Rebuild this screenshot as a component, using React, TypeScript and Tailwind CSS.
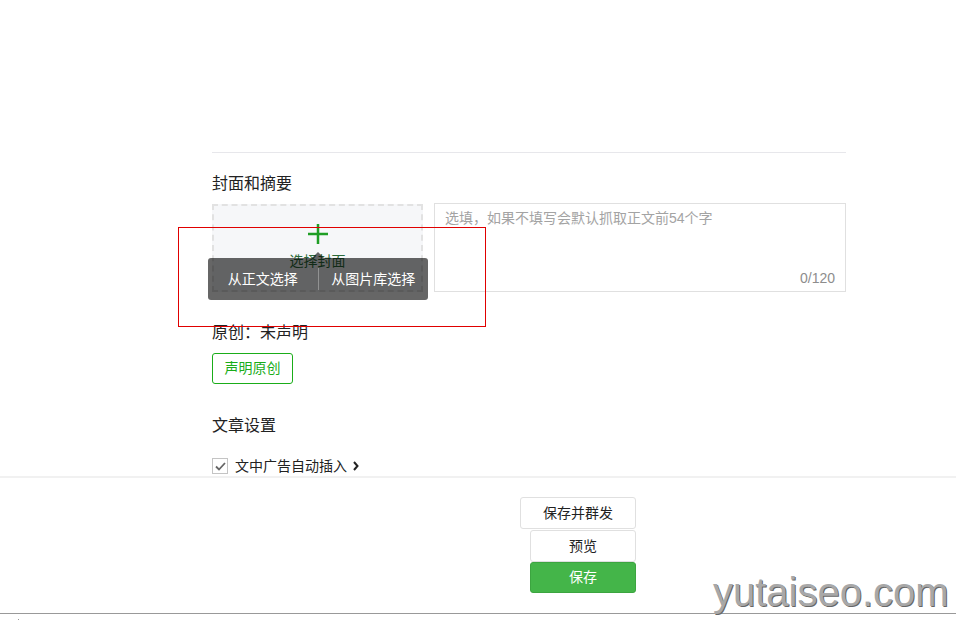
import React from 'react';

const font = "font-['Liberation_Sans','Noto_Sans_CJK_SC',sans-serif]";

export default function App() {
  return (
    <div className={`relative h-[621px] w-[956px] overflow-hidden bg-white text-[#222] ${font}`}>
      <div className="flex h-[621px] flex-col">
        {/* editor body */}
        <div className="h-[476px] shrink-0 overflow-hidden">
          <div className="ml-[212px] w-[634px] pt-[152px]">
            <div className="border-t border-[#e7e7eb]" />
            <h3 className="mt-[20px] text-[16px] leading-[22px]">封面和摘要</h3>

            <div className="mt-[8px] flex items-start gap-[11px]">
              <div className="relative mt-px h-[88px] w-[211px] border-2 border-dashed border-[#e2e2e2] bg-[#f6f7f9]">
                <div className="flex flex-col items-center pt-[17px]">
                  <svg width="22" height="22" viewBox="0 0 22 22">
                    <path d="M11 1v20M1 11h20" stroke="#1f9e25" strokeWidth="2.5" />
                  </svg>
                  <span className="mt-[5px] text-[14px] leading-[22px] text-[#2c6b3a]">选择封面</span>
                </div>

                {/* popover */}
                <div className="absolute left-[-6px] top-[52px] z-10 flex h-[42px] w-[220px] items-center rounded-[3px] bg-black/60 text-[14px] text-white">
                  <span className="absolute left-[104px] top-[-6px] h-0 w-0 border-x-[6px] border-b-[6px] border-x-transparent border-b-black/60" />
                  <button className="flex-1 text-center leading-[20px]">从正文选择</button>
                  <span className="h-[22px] w-px bg-white/30" />
                  <button className="flex-1 text-center leading-[20px]">从图片库选择</button>
                </div>
              </div>

              <div className="flex h-[89px] w-[412px] flex-col justify-between border border-[#e0e0e0] px-[10px] pb-[3px] pt-[4px]">
                <p className="text-[14px] leading-[20px] text-[#a3a3a3]">选填，如果不填写会默认抓取正文前54个字</p>
                <p className="text-right text-[14px] leading-[20px] text-[#8d8d8d]">0/120</p>
              </div>
            </div>

            <p className="mt-[30px] text-[16px] leading-[22px]">原创：未声明</p>
            <button className="mt-[9px] h-[31px] w-[81px] rounded-[3px] border border-[#1aad19] text-[14px] text-[#1aad19]">
              声明原创
            </button>

            <h3 className="mt-[31px] text-[16px] leading-[22px]">文章设置</h3>
            <div className="mt-[20px] flex items-center">
              <span className="flex h-[16px] w-[16px] items-center justify-center border border-[#c4c4c4]">
                <svg width="11" height="9" viewBox="0 0 11 9">
                  <path d="M1 4.5l3 3L10 1" fill="none" stroke="#666" strokeWidth="1.8" />
                </svg>
              </span>
              <span className="ml-[7px] text-[14px] leading-[18px]">文中广告自动插入</span>
              <svg className="ml-[6px]" width="6" height="10" viewBox="0 0 6 10">
                <path d="M1 1l3.5 4L1 9" fill="none" stroke="#222" strokeWidth="2" />
              </svg>
            </div>
          </div>
        </div>

        {/* toolbar */}
        <div className="flex-1 border-t-2 border-[#f1f1f1]">
          <div className="flex w-[636px] flex-col items-end pt-[19px] text-[14px]">
            <button className="h-[32px] w-[116px] rounded-[3px] border border-[#e0e0e0] bg-white">保存并群发</button>
            <button className="mt-px h-[32px] w-[106px] rounded-[3px] border border-[#e0e0e0] bg-white">预览</button>
            <button className="h-[31px] w-[106px] rounded-[3px] border border-[#3ca540] bg-[#44b549] text-white">保存</button>
          </div>
        </div>
        <div className="h-[8px] shrink-0 border-t border-[#999]">
          <span className="ml-[18px] mt-[5px] block h-px w-px bg-[#999]" />
        </div>
      </div>

      {/* annotation */}
      <div className="pointer-events-none absolute left-[178px] top-[227px] h-[100px] w-[308px] border border-[#e00000]" />

      {/* watermark */}
      <span className="pointer-events-none absolute left-[713px] top-[572px] font-['Liberation_Sans',sans-serif] text-[40px] leading-none text-[#a8a8a8] [text-shadow:1px_1px_0_#666]">
        yutaiseo.com
      </span>
    </div>
  );
}
